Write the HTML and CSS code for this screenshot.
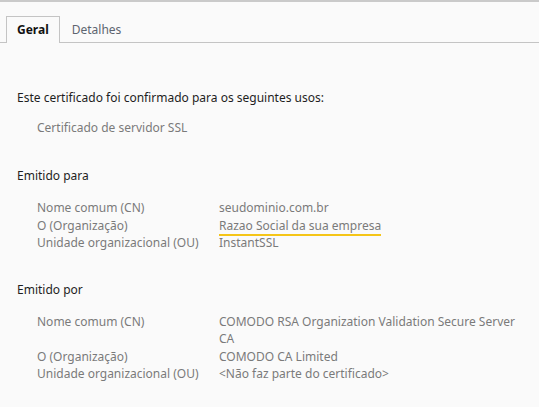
FILE: index.html
```html
<!DOCTYPE html>
<html lang="pt">

<head>
    <meta charset="UTF-8">
    <title>Certificado</title>
    <link rel="stylesheet" href="styles.css">
</head>

<body>
    <div class="tabs">
        <div class="tab active">Geral</div>
        <div class="tab">Detalhes</div>
    </div>
    <div class="content">
        <p class="title">Este certificado foi confirmado para os seguintes usos:</p>
        <p class="usage">Certificado de servidor SSL</p>

        <p class="title section">Emitido para</p>
        <div class="fields">
            <div class="label">Nome comum (CN)</div>
            <div class="value">seudominio.com.br</div>
            <div class="label">O (Organização)</div>
            <div class="value"><span class="mark">Razao Social da sua empresa</span></div>
            <div class="label">Unidade organizacional (OU)</div>
            <div class="value">InstantSSL</div>
        </div>

        <p class="title section issuer">Emitido por</p>
        <div class="fields">
            <div class="label">Nome comum (CN)</div>
            <div class="value">COMODO RSA Organization Validation Secure Server CA</div>
            <div class="label">O (Organização)</div>
            <div class="value">COMODO CA Limited</div>
            <div class="label">Unidade organizacional (OU)</div>
            <div class="value">&lt;Não faz parte do certificado&gt;</div>
        </div>
    </div>
</body>

</html>
```

FILE: styles.css
```css
body {
    margin: 0;
    font-family: 'Noto Sans', sans-serif;
    font-size: 12px;
    background: #fafafa;
    border-top: 2px solid #cacaca;
    color: #1e1e1e;
}

.tabs {
    display: flex;
    padding: 14px 0 0 6px;
    border-bottom: 1px solid #c4c4c4;
}

.tab {
    height: 25px;
    line-height: 25px;
    padding: 0 11px;
    color: #5d6570;
    border: 1px solid transparent;
    border-bottom: none;
    margin-bottom: -1px;
}

.tab.active {
    font-weight: bold;
    color: #111;
    background: #fafafa;
    border-color: #c4c4c4;
    height: 26px;
    padding: 0 10px;
}

.content {
    padding: 46px 17px 0;
}

p {
    margin: 0;
}

.title {
    line-height: 17px;
}

.usage {
    margin: 13px 0 0 20px;
    color: #7a7a7a;
    line-height: 17px;
}

.section {
    margin-top: 31px;
}

.section.issuer {
    margin-top: 29px;
}

.fields {
    display: grid;
    grid-template-columns: 182px 1fr;
    margin: 15px 0 0 20px;
    line-height: 17.5px;
    color: #7a7a7a;
}

.mark {
    border-bottom: 2px solid #f5c518;
}
```
